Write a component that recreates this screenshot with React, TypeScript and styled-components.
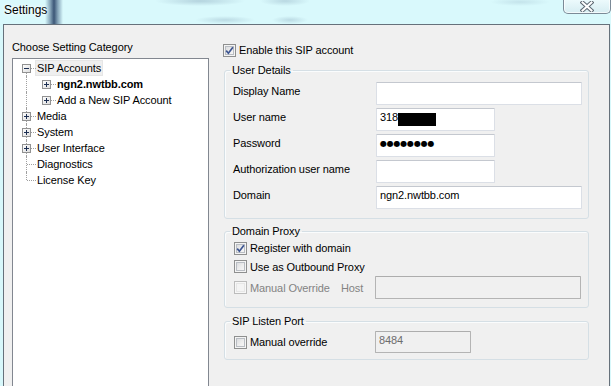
import React from "react";
import styled, { createGlobalStyle } from "styled-components";

const GlobalStyle = createGlobalStyle`
  html, body { margin: 0; padding: 0; }
  body {
    background: #d8f8fb;
    font-family: "Liberation Sans", Arial, sans-serif;
    font-size: 11px;
    letter-spacing: -0.1px;
    color: #000;
    overflow: hidden;
  }
`;

const Window = styled.div`
  width: 611px;
  height: 386px;
  overflow: hidden;
  display: flex;
  flex-direction: column;
`;

const TitleBar = styled.div`
  flex: none;
  height: 24px;
  display: flex;
  justify-content: space-between;
  align-items: flex-start;
  background:
    linear-gradient(90deg, rgba(0,0,0,0) 45px, rgba(40,70,110,0.45) 50px, rgba(20,45,85,0.8) 54px, rgba(40,70,110,0.45) 58px, rgba(0,0,0,0) 63px),
    radial-gradient(ellipse 45px 5px at 200px 1px, rgba(110,140,165,0.35), rgba(0,0,0,0)),
    radial-gradient(ellipse 25px 5px at 285px 1px, rgba(110,140,165,0.3), rgba(0,0,0,0)),
    radial-gradient(ellipse 30px 4px at 225px 20px, rgba(110,140,165,0.28), rgba(0,0,0,0)),
    radial-gradient(ellipse 18px 4px at 290px 20px, rgba(110,140,165,0.28), rgba(0,0,0,0)),
    radial-gradient(ellipse 30px 4px at 520px 2px, rgba(110,140,165,0.2), rgba(0,0,0,0)),
    #d9f9fc;
`;

const TitleText = styled.div`
  padding: 3px 0 0 4px;
  font-size: 12px;
  line-height: 15px;
  letter-spacing: 0;
  text-shadow: 0 0 5px #fff, 0 0 3px #fff;
`;

const CloseButton = styled.div`
  width: 48px;
  height: 15px;
  margin-top: -1px;
  box-sizing: border-box;
  border: 1px solid #7b8a97;
  border-top: none;
  border-radius: 0 0 5px 5px;
  background: linear-gradient(#eefbfd, #d6edf2);
  box-shadow: inset 0 0 0 1px rgba(255, 255, 255, 0.7);
  display: flex;
  align-items: center;
  justify-content: center;
`;

const Body = styled.div`
  flex: 1;
  min-height: 0;
  margin: 0 1px 0 3px;
  border: 1px solid #66717b;
  border-bottom: none;
  background: #f0f0f0;
  display: flex;
  gap: 14px;
  padding: 15px 0 0 8px;
`;

const LeftPanel = styled.div`
  flex: none;
  width: 197px;
  display: flex;
  flex-direction: column;
`;

const CategoryLabel = styled.div`
  line-height: 14px;
  margin-bottom: 4px;
`;

const TreeBox = styled.div`
  flex: none;
  height: 340px;
  box-sizing: border-box;
  border: 1px solid #828790;
  background: #fff;
  padding: 1px 0 0 3px;
`;

const TreeRow = styled.div`
  display: flex;
  align-items: center;
  height: 16px;
`;

type VLine = "none" | "full" | "top" | "bottom";

const Cell = styled.div<{ $v: VLine; $h: boolean }>`
  position: relative;
  flex: none;
  width: 20px;
  height: 16px;
  &::before {
    content: "";
    display: ${(p) => (p.$v === "none" ? "none" : "block")};
    position: absolute;
    left: 10px;
    top: ${(p) => (p.$v === "bottom" ? 8 : 0)}px;
    height: ${(p) => (p.$v === "full" ? 16 : 8)}px;
    border-left: 1px dotted #a0a0a0;
  }
  &::after {
    content: "";
    display: ${(p) => (p.$h ? "block" : "none")};
    position: absolute;
    left: 11px;
    top: 8px;
    width: 9px;
    border-top: 1px dotted #a0a0a0;
  }
`;

const Expander = styled.svg`
  position: absolute;
  left: 6px;
  top: 4px;
  z-index: 1;
`;

const NodeLabel = styled.span<{ $selected?: boolean; $bold?: boolean }>`
  padding: 0 1px;
  margin-left: 0;
  line-height: 14px;
  white-space: nowrap;
  font-weight: ${(p) => (p.$bold ? 700 : 400)};
  background: ${(p) => (p.$selected ? "#efefef" : "transparent")};
  outline: ${(p) => (p.$selected ? "1px solid #e6e6e6" : "none")};
`;

const RightPanel = styled.div`
  flex: none;
  width: 367px;
  display: flex;
  flex-direction: column;
  padding-top: 3px;
`;

const CheckRow = styled.div<{ $disabled?: boolean; $indent?: number }>`
  display: flex;
  align-items: center;
  gap: 3px;
  height: 14px;
  line-height: 14px;
  white-space: nowrap;
  margin-left: ${(p) => p.$indent ?? 0}px;
  color: ${(p) => (p.$disabled ? "#838383" : "#000")};
`;

const Box = styled.span<{ $disabled?: boolean }>`
  flex: none;
  width: 13px;
  height: 13px;
  box-sizing: border-box;
  border: 1px solid ${(p) => (p.$disabled ? "#bcbcbc" : "#8e8f8f")};
  background: ${(p) =>
    p.$disabled ? "#f4f4f4" : "linear-gradient(135deg, #d2d4d8 0%, #eeeeee 55%, #fbfbfb 100%)"};
  box-shadow: inset 0 0 0 1px ${(p) => (p.$disabled ? "#f7f7f7" : "#f4f4f4")},
    inset 0 0 0 2px ${(p) => (p.$disabled ? "#e6e6e6" : "#b9bdc3")};
  display: flex;
  align-items: center;
  justify-content: center;
`;

const Group = styled.fieldset<{ $mt: number; $pt: number; $pb: number }>`
  margin: ${(p) => p.$mt}px 0 0 1px;
  width: 365px;
  box-sizing: border-box;
  border: 1px solid #d5dfe5;
  border-radius: 3px;
  box-shadow: inset 1px 1px 0 #fafcfd;
  padding: ${(p) => p.$pt}px 0 ${(p) => p.$pb}px 8px;
  min-width: 0;
`;

const Legend = styled.legend`
  margin-left: -3px;
  padding: 0 2px;
  line-height: 14px;
`;

const FormGrid = styled.div`
  display: grid;
  grid-template-columns: 143px auto;
  grid-auto-rows: 23px;
  row-gap: 3px;
`;

const FieldLabel = styled.div`
  padding-top: 2px;
  line-height: 14px;
  white-space: nowrap;
`;

const Field = styled.div<{ $w: number; $h?: number; $disabled?: boolean }>`
  width: ${(p) => p.$w}px;
  height: ${(p) => p.$h ?? 23}px;
  box-sizing: border-box;
  border: 1px solid ${(p) => (p.$disabled ? "#b4b4b4" : "#dbdfe6")};
  border-top-color: ${(p) => (p.$disabled ? "#adadad" : "#c4c8cf")};
  border-radius: 1px;
  background: ${(p) => (p.$disabled ? "#f0f0f0" : "#fff")};
  color: ${(p) => (p.$disabled ? "#6d6d6d" : "#000")};
  padding: 0 3px;
  line-height: 17px;
  white-space: nowrap;
  display: flex;
  align-items: flex-start;
`;

const FieldText = styled.span`
  line-height: 17px;
`;

const Redacted = styled.span`
  display: inline-block;
  width: 38px;
  height: 13px;
  margin-top: 4px;
  background: #000;
`;

const Dots = styled.span`
  font-family: "DejaVu Sans", sans-serif;
  font-size: 8px;
  letter-spacing: -0.2px;
  line-height: 18px;
`;

const ProxyGrid = styled.div`
  display: grid;
  grid-template-columns: 108px 34px auto;
  grid-template-rows: 18px 19px 23px;
  align-items: center;
`;

const SpanAll = styled.div`
  grid-column: 1 / -1;
`;

const HostLabel = styled.div`
  color: #838383;
  line-height: 14px;
  padding-top: 1px;
`;

const PortGrid = styled.div`
  display: grid;
  grid-template-columns: 142px auto;
  grid-template-rows: 22px;
  align-items: center;
`;

const CheckMark = () => (
  <svg width="9" height="9" viewBox="0 0 9 9">
    <path d="M1.2 4.6 L3.4 7.2 L7.9 1.2" fill="none" stroke="#3d5591" strokeWidth="1.7" />
  </svg>
);

const Checkbox: React.FC<{ checked?: boolean; disabled?: boolean }> = ({ checked, disabled }) => (
  <Box $disabled={disabled}>{checked ? <CheckMark /> : null}</Box>
);

const ExpanderIcon: React.FC<{ open?: boolean }> = ({ open }) => (
  <Expander width="9" height="9" viewBox="0 0 9 9">
    <defs>
      <linearGradient id={open ? "exg1" : "exg2"} x1="0" y1="0" x2="1" y2="1">
        <stop offset="0" stopColor="#ffffff" />
        <stop offset="1" stopColor="#dcdcdc" />
      </linearGradient>
    </defs>
    <rect x="0.5" y="0.5" width="8" height="8" fill={`url(#${open ? "exg1" : "exg2"})`} stroke="#929292" />
    <path d="M2 4.5 H7" stroke="#1d2f52" strokeWidth="1" />
    {!open && <path d="M4.5 2 V7" stroke="#1d2f52" strokeWidth="1" />}
  </Expander>
);

type NodeDef = {
  label: string;
  cells: { v: VLine; h: boolean; box?: "open" | "closed" }[];
  selected?: boolean;
  bold?: boolean;
};

const nodes: NodeDef[] = [
  { label: "SIP Accounts", cells: [{ v: "bottom", h: true, box: "open" }], selected: true },
  { label: "ngn2.nwtbb.com", cells: [{ v: "full", h: false }, { v: "none", h: true, box: "closed" }], bold: true },
  { label: "Add a New SIP Account", cells: [{ v: "full", h: false }, { v: "none", h: true, box: "closed" }] },
  { label: "Media", cells: [{ v: "full", h: true, box: "closed" }] },
  { label: "System", cells: [{ v: "full", h: true, box: "closed" }] },
  { label: "User Interface", cells: [{ v: "full", h: true, box: "closed" }] },
  { label: "Diagnostics", cells: [{ v: "full", h: true }] },
  { label: "License Key", cells: [{ v: "top", h: true }] },
];

const CloseGlyph = () => (
  <svg width="14" height="11" viewBox="0 0 14 11">
    <path d="M2.5 1.5 L11.5 9.5 M11.5 1.5 L2.5 9.5" stroke="#5d6873" strokeWidth="4" strokeLinecap="square" fill="none" />
    <path d="M2.5 1.5 L11.5 9.5 M11.5 1.5 L2.5 9.5" stroke="#ffffff" strokeWidth="2" strokeLinecap="square" fill="none" />
  </svg>
);

export default function App() {
  return (
    <Window>
      <GlobalStyle />
      <TitleBar>
        <TitleText>Settings</TitleText>
        <CloseButton>
          <CloseGlyph />
        </CloseButton>
      </TitleBar>
      <Body>
        <LeftPanel>
          <CategoryLabel>Choose Setting Category</CategoryLabel>
          <TreeBox>
            {nodes.map((n) => (
              <TreeRow key={n.label}>
                {n.cells.map((c, i) => (
                  <Cell key={i} $v={c.v} $h={c.h}>
                    {c.box && <ExpanderIcon open={c.box === "open"} />}
                  </Cell>
                ))}
                <NodeLabel $selected={n.selected} $bold={n.bold}>
                  {n.label}
                </NodeLabel>
              </TreeRow>
            ))}
          </TreeBox>
        </LeftPanel>
        <RightPanel>
          <CheckRow>
            <Checkbox checked />
            <span>Enable this SIP account</span>
          </CheckRow>

          <Group $mt={6} $pt={5} $pb={9}>
            <Legend>User Details</Legend>
            <FormGrid>
              <FieldLabel>Display Name</FieldLabel>
              <Field $w={206} />
              <FieldLabel>User name</FieldLabel>
              <Field $w={119}>
                <FieldText>318</FieldText>
                <Redacted />
              </Field>
              <FieldLabel>Password</FieldLabel>
              <Field $w={119}>
                <Dots>●●●●●●●●</Dots>
              </Field>
              <FieldLabel>Authorization user name</FieldLabel>
              <Field $w={119} />
              <FieldLabel>Domain</FieldLabel>
              <Field $w={206}>
                <FieldText>ngn2.nwtbb.com</FieldText>
              </Field>
            </FormGrid>
          </Group>

          <Group $mt={5} $pt={1} $pb={8}>
            <Legend>Domain Proxy</Legend>
            <ProxyGrid>
              <SpanAll>
                <CheckRow $indent={1}>
                  <Checkbox checked />
                  <span>Register with domain</span>
                </CheckRow>
              </SpanAll>
              <SpanAll>
                <CheckRow $indent={1}>
                  <Checkbox />
                  <span>Use as Outbound Proxy</span>
                </CheckRow>
              </SpanAll>
              <CheckRow $indent={1} $disabled>
                <Checkbox disabled />
                <span>Manual Override</span>
              </CheckRow>
              <HostLabel>Host</HostLabel>
              <Field $w={206} $disabled />
            </ProxyGrid>
          </Group>

          <Group $mt={6} $pt={3} $pb={6}>
            <Legend>SIP Listen Port</Legend>
            <PortGrid>
              <CheckRow $indent={1}>
                <Checkbox />
                <span>Manual override</span>
              </CheckRow>
              <Field $w={96} $h={22} $disabled>
                <FieldText>8484</FieldText>
              </Field>
            </PortGrid>
          </Group>
        </RightPanel>
      </Body>
    </Window>
  );
}
